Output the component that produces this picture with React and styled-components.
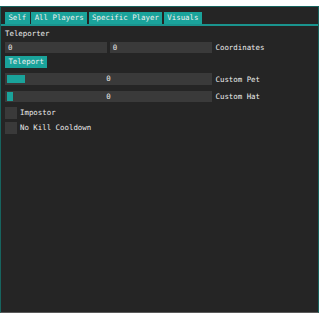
import React from 'react';
import styled, { createGlobalStyle } from 'styled-components';

const Global = createGlobalStyle`
  body {
    margin: 0;
    background: #ffffff;
  }
`;

// 창 전체
const Window = styled.div`
  margin-top: 6px;
  width: 319px;
  height: 307px;
  box-sizing: border-box;
  border: 1px solid #17645f;
  border-bottom-color: #5a5a5a;
  background: #252525;
  padding: 5px 4px;
  font-family: 'DejaVu Sans Mono', 'Liberation Mono', monospace;
  font-size: 7.4px;
  color: #ececec;
  display: flex;
  flex-direction: column;
`;

// 탭 바
const TabBar = styled.div`
  display: flex;
  gap: 1.7px;
  margin: 0 -4px;
  padding: 0 4px;
  border-bottom: 2px solid #1a948e;
`;

const Tab = styled.div`
  height: 11.5px;
  line-height: 11.5px;
  padding: 0 3.4px;
  background: #1aa39b;
  color: #f0f0f0;
`;

const Label = styled.div`
  margin-top: 3px;
  height: 9px;
  line-height: 9px;
`;

const Row = styled.div`
  display: flex;
  align-items: center;
  margin-top: ${(p) => p.gap || 3}px;
`;

const Fields = styled.div`
  display: flex;
  gap: 2.5px;
  width: 207px;
`;

const Input = styled.div`
  flex: 1;
  height: 11.6px;
  line-height: 11.6px;
  padding: 0 3px;
  background: #3a3a3a;
`;

const Slider = styled.div`
  position: relative;
  width: 207px;
  height: 11.5px;
  line-height: 11.5px;
  background: #3a3a3a;
  text-align: center;
`;

const Grab = styled.div`
  position: absolute;
  left: 1.7px;
  top: 1.5px;
  bottom: 1.5px;
  width: ${(p) => p.w}px;
  background: #1aa39b;
`;

const SliderValue = styled.span`
  position: relative;
`;

const Side = styled.span`
  margin-left: 3.5px;
`;

const Button = styled.div`
  height: 11.7px;
  line-height: 11.7px;
  padding: 0 3.4px;
  background: #1aa39b;
  color: #f0f0f0;
`;

const Check = styled.div`
  width: 12px;
  height: 11.6px;
  background: #3a3a3a;
`;

const CheckLabel = styled.span`
  margin-left: 3px;
`;

const App = () => {
  return (
    <>
      <Global />
      <Window>
        <TabBar>
          <Tab>Self</Tab>
          <Tab>All Players</Tab>
          <Tab>Specific Player</Tab>
          <Tab>Visuals</Tab>
        </TabBar>
        <Label>Teleporter</Label>
        <Row gap={4}>
          <Fields>
            <Input>0</Input>
            <Input>0</Input>
          </Fields>
          <Side>Coordinates</Side>
        </Row>
        <Row>
          <Button>Teleport</Button>
        </Row>
        <Row gap={5.5}>
          <Slider>
            <Grab w={18.3} />
            <SliderValue>0</SliderValue>
          </Slider>
          <Side>Custom Pet</Side>
        </Row>
        <Row gap={5.8}>
          <Slider>
            <Grab w={6} />
            <SliderValue>0</SliderValue>
          </Slider>
          <Side>Custom Hat</Side>
        </Row>
        <Row gap={5}>
          <Check />
          <CheckLabel>Impostor</CheckLabel>
        </Row>
        <Row gap={3.5}>
          <Check />
          <CheckLabel>No Kill Cooldown</CheckLabel>
        </Row>
      </Window>
    </>
  );
};

export default App;
